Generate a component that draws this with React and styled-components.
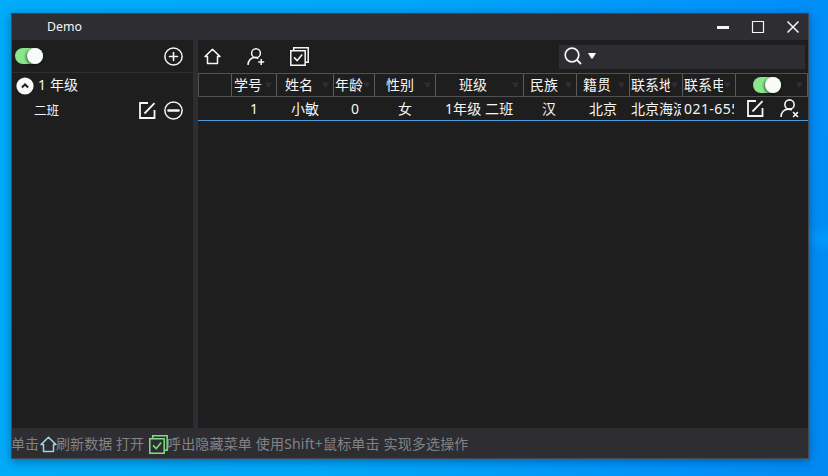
import React from "react";
import styled, { createGlobalStyle } from "styled-components";

const Global = createGlobalStyle`
  * { box-sizing: border-box; }
  body { margin: 0; overflow: hidden; font-family: "Noto Sans", "Noto Sans CJK SC", sans-serif; }
`;

const Desktop = styled.div`
  width: 828px;
  height: 476px;
  padding: 13px 19px 17px 11px;
  background:
    radial-gradient(ellipse 40px 14px at 828px 238px, rgba(0, 170, 255, 0.5), transparent),
    linear-gradient(100deg, #00adf8 0%, #00a6f8 45%, #0090fa 85%, #008af0 100%);
`;

const Window = styled.div`
  display: flex;
  flex-direction: column;
  height: 446px;
  background: #2d2d32;
  color: #f6f6f6;
  border: 1px solid #3f4a52;
  border-top-color: #34444e;
  box-shadow: 0 2px 9px rgba(0, 20, 60, 0.42);
`;

const TitleBar = styled.header`
  display: flex;
  align-items: center;
  height: 26px;
  flex: none;
  padding: 0 9px 0 35px;
  font-size: 12px;
`;

const Title = styled.span`
  flex: 1;
  font-size: 12.3px;
  line-height: 26px;
`;

const WindowControls = styled.div`
  display: flex;
  align-items: center;
  gap: 22px;
`;

const Main = styled.main`
  display: flex;
  flex: none;
  height: 388px;
`;

const Sidebar = styled.aside`
  width: 181px;
  background: #1e1e1e;
`;

const SideTools = styled.div`
  display: flex;
  align-items: center;
  justify-content: space-between;
  height: 33px;
  padding: 0 10px 0 3px;
  border-bottom: 1px solid #303034;
`;

const Splitter = styled.div`
  width: 5px;
  background: #2d2d32;
`;

const GroupRow = styled.div`
  display: flex;
  align-items: center;
  height: 25px;
  padding-left: 4px;
  gap: 4px;
  font-size: 14px;
  line-height: 21px;
`;

const GroupName = styled.span`
  padding-bottom: 2px;
  letter-spacing: 0.15px;
`;

const ClassRow = styled.div`
  display: flex;
  align-items: center;
  height: 25px;
  padding: 0 10px 0 22px;
  font-size: 12.5px;
`;

const ClassName = styled.span`
  flex: 1;
  line-height: 24px;
`;

const RowActions = styled.div`
  display: flex;
  align-items: center;
  gap: ${(p) => p.$gap}px;
`;

const Content = styled.section`
  display: flex;
  flex-direction: column;
  width: 610px;
  background: #1e1e1e;
`;

const Toolbar = styled.div`
  display: flex;
  align-items: center;
  height: 33px;
  padding: 0 3px 0 6px;
`;

const ToolIcons = styled.div`
  display: flex;
  align-items: center;
  flex: 1;
  gap: 25.5px;
`;

const SearchBox = styled.div`
  display: flex;
  align-items: center;
  gap: 6px;
  width: 246px;
  height: 24px;
  padding-left: 5px;
  padding-bottom: 1px;
  background: #2d2d32;
`;

const columnTracks = "33px 45px 57px 41px 61px 88px 53px 53px 53px 53px 1fr";

const HeaderRow = styled.div`
  display: grid;
  grid-template-columns: ${columnTracks};
  height: 24px;
  border: solid #505050;
  border-width: 1px 0 1px 1px;
`;

const HeaderCell = styled.div`
  display: flex;
  align-items: center;
  justify-content: space-between;
  min-width: 0;
  padding: 0 4px 0 ${(p) => p.$left}px;
  border-right: 1px solid #5a5a5a;
  font-size: 14px;
`;

const HeaderLabel = styled.span`
  max-width: 39px;
  line-height: 22px;
  overflow: hidden;
  white-space: nowrap;
`;

const DataRow = styled.div`
  display: grid;
  grid-template-columns: ${columnTracks};
  height: 24px;
  padding-left: 1px;
  border-bottom: 1px solid #499bdc;
`;

const DataCell = styled.div`
  min-width: 0;
  padding-left: ${(p) => p.$left}px;
  margin-right: 2px;
  font-size: 14px;
  letter-spacing: ${(p) => p.$spacing || 0}px;
  line-height: 23px;
  white-space: nowrap;
  overflow: hidden;
`;

const ActionCell = styled.div`
  display: flex;
  align-items: center;
  justify-content: space-between;
  padding: 0 9px 0 11px;
`;

const ToggleTrack = styled.div`
  display: flex;
  align-items: center;
  justify-content: flex-end;
  width: 28px;
  height: 16px;
  border-radius: 8px;
  background: #8be78b;
`;

const ToggleThumb = styled.div`
  width: 16px;
  height: 16px;
  border-radius: 50%;
  background: #fafafa;
  box-shadow: -1px 1px 3px rgba(0, 0, 0, 0.6);
`;

const StatusBar = styled.footer`
  display: flex;
  align-items: center;
  height: 30px;
  padding-top: 2px;
  color: #838383;
  font-size: 14px;
  line-height: 28px;
  white-space: nowrap;
`;

const StatusText = styled.span`
  width: ${(p) => p.$width}px;
  margin-left: -1px;
  letter-spacing: ${(p) => p.$spacing || 0}px;
`;

const Icon = styled.svg`
  display: block;
  flex: none;
  overflow: visible;
  fill: none;
  stroke: currentColor;
  stroke-width: 1.5;
  color: ${(p) => p.$color || "#f6f6f6"};
`;

const Toggle = () => (
  <ToggleTrack><ToggleThumb /></ToggleTrack>
);

const HomeIcon = ({ color }) => (
  <Icon $color={color} width="17" height="17" viewBox="0 0 17 17">
    <path d="M1 8.6 8.5 1.3 16 8.6H13.5V15.4H3.5V8.6Z" strokeLinejoin="round" />
  </Icon>
);

const ChecksIcon = ({ color }) => (
  <Icon $color={color} width="19" height="19" viewBox="0 0 19 19">
    <path d="M.8 3.7H15.2V18.2H.8ZM3.7 3.7V.8H18.2V15.3H15.2" />
    <path d="m4 10.4 3.2 3.2 5-6" />
  </Icon>
);

const EditIcon = () => (
  <Icon width="17" height="17" viewBox="0 0 17 17">
    <path d="M9 1H1V16H15.5V8M5.5 11.5 15.5 1.2" strokeWidth="1.8" />
  </Icon>
);

const UserIcon = ({ remove }) => (
  <Icon width={remove ? 19 : 18} height={remove ? 19 : 18} viewBox="0 0 18 18">
    <circle cx="9" cy="5.2" r="4.4" />
    <path d="M1 17C1 12.5 4 9.6 8 9.6q2 0 3.2 1" />
    <path d={remove ? "m12.4 12.4 4.6 4.6m0-4.6-4.6 4.6" : "M14.2 11v6m-3-3h6"} />
  </Icon>
);

const CircleIcon = ({ minus }) => (
  <Icon width="19" height="19" viewBox="0 0 19 19">
    <circle cx="9.5" cy="9.5" r="8.6" />
    <path d={minus ? "M4.5 9.5h10" : "M5.5 9.5h8M9.5 5.5v8"} strokeWidth={minus ? 2.6 : 1.6} strokeLinecap="round" />
  </Icon>
);

const CollapseIcon = () => (
  <Icon width="18" height="18" viewBox="0 0 18 18">
    <circle cx="9" cy="9" r="8.6" fill="#fafafa" stroke="none" />
    <path d="m5.9 10.5 3.1-3 3.1 3" stroke="#222" strokeWidth="2" />
  </Icon>
);

const SearchIcon = () => (
  <Icon width="18" height="18" viewBox="0 0 18 18">
    <circle cx="8" cy="8" r="6.8" strokeWidth="1.7" />
    <path d="m13 13 4 4" strokeWidth="1.8" />
  </Icon>
);

const CaretIcon = ({ color = "#fff", width = 8 }) => (
  <Icon $color={color} width={width} height="6" viewBox="0 0 8 6">
    <path d="M0 0H8L4.7 5.5H3.3Z" fill="currentColor" stroke="none" />
  </Icon>
);

const SortIcon = () => <CaretIcon color="#303034" width={7} />;

const columns = [
  { label: "学号", left: 2, value: "1", valueLeft: 18 },
  { label: "姓名", left: 8, value: "小敏", valueLeft: 14 },
  { label: "年龄", left: 1, value: "0", valueLeft: 17 },
  { label: "性别", left: 11, value: "女", valueLeft: 23 },
  { label: "班级", left: 23, value: "1年级 二班", valueLeft: 9, spacing: 0.1 },
  { label: "民族", left: 6, value: "汉", valueLeft: 18 },
  { label: "籍贯", left: 6, value: "北京", valueLeft: 12 },
  { label: "联系地址", left: 1, value: "北京海淀", valueLeft: 1 },
  { label: "联系电话", left: 1, value: "021-6555", valueLeft: 1, spacing: 0.45 },
];

export default function App() {
  return (
    <Desktop>
      <Global />
      <Window>
        <TitleBar>
          <Title>Demo</Title>
          <WindowControls>
            <Icon width="12" height="12" viewBox="0 0 12 12"><path d="M0 6.5h12" strokeWidth="3" /></Icon>
            <Icon width="14" height="12" viewBox="0 0 14 12"><path d="M1.5.5h11v11h-11Z" strokeWidth="1.2" /></Icon>
            <Icon width="12" height="12" viewBox="0 0 12 12"><path d="m.5.5 11 11m0-11-11 11" /></Icon>
          </WindowControls>
        </TitleBar>
        <Main>
          <Sidebar>
            <SideTools><Toggle /><CircleIcon /></SideTools>
            <GroupRow><CollapseIcon /><GroupName>1 年级</GroupName></GroupRow>
            <ClassRow>
              <ClassName>二班</ClassName>
              <RowActions $gap={8}><EditIcon /><CircleIcon minus /></RowActions>
            </ClassRow>
          </Sidebar>
          <Splitter />
          <Content>
            <Toolbar>
              <ToolIcons><HomeIcon /><UserIcon /><ChecksIcon /></ToolIcons>
              <SearchBox><SearchIcon /><CaretIcon /></SearchBox>
            </Toolbar>
            <HeaderRow>
              <HeaderCell $left={0} />
              {columns.map((c) => (
                <HeaderCell key={c.label} $left={c.left}>
                  <HeaderLabel>{c.label}</HeaderLabel><SortIcon />
                </HeaderCell>
              ))}
              <HeaderCell $left={17}><Toggle /><SortIcon /></HeaderCell>
            </HeaderRow>
            <DataRow>
              <DataCell $left={0} />
              {columns.map((c) => (
                <DataCell key={c.label} $left={c.valueLeft} $spacing={c.spacing}>{c.value}</DataCell>
              ))}
              <ActionCell><EditIcon /><UserIcon remove /></ActionCell>
            </DataRow>
          </Content>
        </Main>
        <StatusBar>
          <StatusText $width={29}>单击</StatusText>
          <HomeIcon color="#a3d3df" />
          <StatusText $width={93} $spacing={0.08}>刷新数据 打开</StatusText>
          <ChecksIcon color="#83dc83" />
          <StatusText $width={304} $spacing={0.17}>呼出隐藏菜单 使用Shift+鼠标单击 实现多选操作</StatusText>
        </StatusBar>
      </Window>
    </Desktop>
  );
}
